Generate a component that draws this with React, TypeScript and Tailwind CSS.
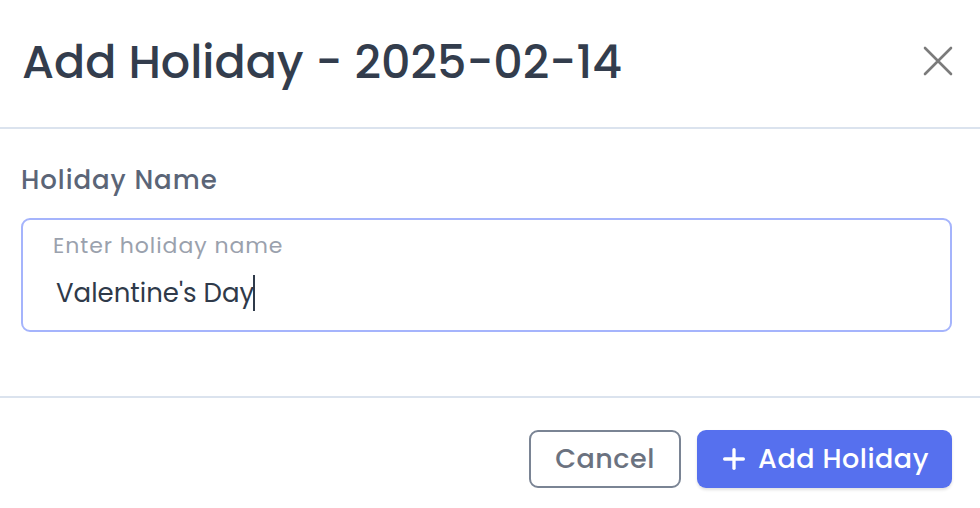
import React from 'react';
import { Plus } from 'lucide-react';

const font = { fontFamily: '"Poppins", "Open Sans", "Noto Sans", sans-serif' };

export default function App() {
    return (
        <div className="w-[980px] h-[508px] bg-white overflow-hidden text-[#374151]" style={font}>
            {/* Header */}
            <div className="h-[129px] flex items-center justify-between pl-[22px] pr-[26px] border-b-2 border-[#dbe3ee]">
                <h2 className="text-[46px] font-medium text-[#333d4d] leading-none pb-1">
                    Add Holiday - 2025-02-14
                </h2>
                <button className="w-[32px] h-[32px] flex items-center justify-center text-[#7b7b7b] mb-[5px]">
                    <svg width="30" height="30" viewBox="0 0 30 30" fill="none" stroke="currentColor" strokeWidth="2.6" strokeLinecap="round">
                        <path d="M2 2 L28 28 M28 2 L2 28" />
                    </svg>
                </button>
            </div>

            {/* Body */}
            <div className="h-[269px] pt-[38px] pl-[21px] pr-[28px] border-b-2 border-[#dbe3ee]">
                <label className="block text-[26px] font-medium text-[#5b6577] leading-none tracking-[0.95px] mb-[25px]">
                    Holiday Name
                </label>
                <div className="h-[114px] rounded-[9px] border-2 border-[#a5b4fc] pl-[30px] pt-[15px]">
                    <div className="text-[22px] text-[#9aa1ad] leading-none tracking-[0.95px]">Enter holiday name</div>
                    <div className="mt-[18px] flex items-center text-[26px] text-[#2f3a4a] leading-none pl-[3px]">
                        <span>Valentine's Day</span>
                        <span className="w-[2px] h-[36px] bg-[#2f3a4a] -ml-[1px]" />
                    </div>
                </div>
            </div>

            {/* Footer */}
            <div className="flex justify-end gap-[16px] pt-[32px] pr-[28px]">
                <button className="w-[152px] h-[58px] rounded-[9px] border-2 border-[#7a8494] text-[27px] text-[#6b7280] font-medium tracking-[0.5px]">
                    Cancel
                </button>
                <button className="w-[255px] h-[58px] rounded-[9px] bg-[#5670ee] text-white text-[27px] font-medium tracking-[0.5px] flex items-center justify-center gap-[8px] pr-[2px] shadow-[0_2px_3px_rgba(0,0,0,0.12)]">
                    <Plus size={32} strokeWidth={2.5} />
                    Add Holiday
                </button>
            </div>
        </div>
    );
}
